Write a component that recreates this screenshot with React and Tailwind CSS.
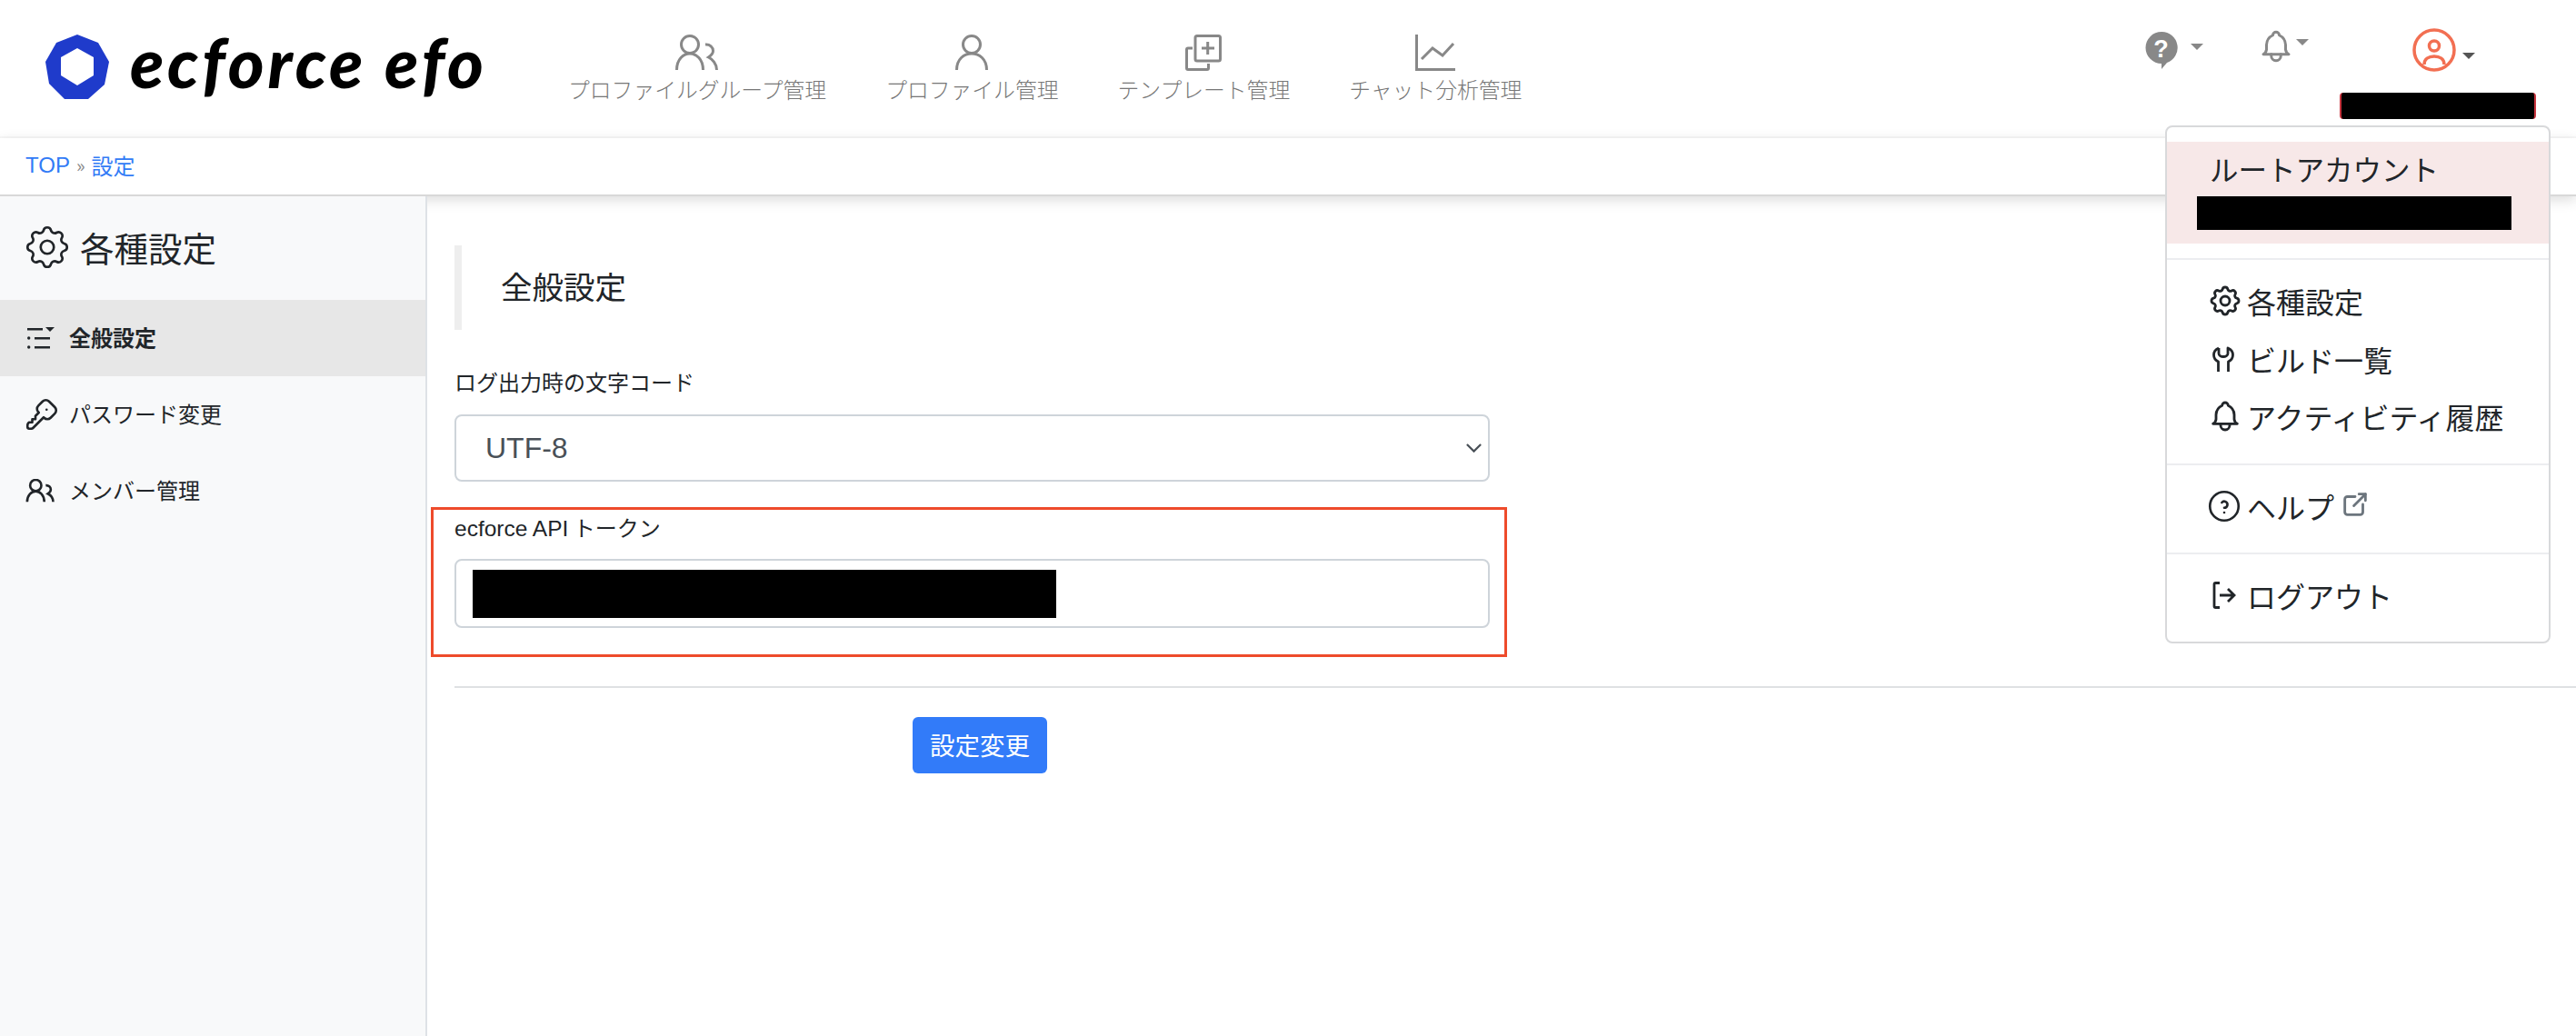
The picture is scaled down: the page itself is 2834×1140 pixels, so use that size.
import { TbSettings, TbBell, TbHelpCircle, TbKey, TbExternalLink } from 'react-icons/tb';

const jp = 'font-["Noto_Sans_CJK_JP","Liberation_Sans",sans-serif]';

function NavItem({ icon, label }) {
  return (
    <div className="flex flex-col items-center text-[#777777]">
      <div className="h-[40px] flex items-center">{icon}</div>
      <div className="text-[23.8px] font-light leading-[34px] mt-[3px] whitespace-nowrap">{label}</div>
    </div>
  );
}

function Caret({ className }) {
  return <div className={'w-0 h-0 border-x-[7px] border-x-transparent border-t-[7px] ' + className}></div>;
}

function SideItem({ icon, label, active }) {
  return (
    <div className={'h-[84px] flex items-center pl-[28px] text-[24px] ' + (active ? 'bg-[#e7e7e7] font-bold' : '')}>
      <div className="w-[48px] flex items-center">{icon}</div>
      <span className="-mt-[2px]">{label}</span>
    </div>
  );
}

function MenuItem({ icon, label, extra, className }) {
  return (
    <div className={'flex items-center pl-[47px] h-[32px] text-[32px] text-[#212529] ' + className}>
      <div className="w-[41px] flex items-center">{icon}</div>
      <span>{label}</span>
      {extra}
    </div>
  );
}

function ListIcon() {
  return (
    <svg className="ml-[2px]" width="30" height="24" viewBox="0 0 30 24" fill="#212529">
      <rect x="0" y="1" width="17" height="2.5" />
      <path d="M20 0h10l-5 5z" />
      <circle cx="1.7" cy="12" r="1.7" />
      <rect x="8" y="11" width="17" height="2.5" />
      <circle cx="1.7" cy="22" r="1.7" />
      <rect x="8" y="21" width="17" height="2.5" />
    </svg>
  );
}

function PeopleIcon({ width, height, stroke, sw }) {
  return (
    <svg width={width} height={height} viewBox="0 0 48 40" fill="none" stroke={stroke} strokeWidth={sw}>
      <circle cx="16" cy="11" r="9.5" />
      <path d="M1.5 39C1.5 27 9 21 16 21s14.5 6 14.5 18" />
      <path d="M33 11c5-.5 8.5 3 8.5 7 0 3-2 5-5 7 4 2 9 7 9 14" />
    </svg>
  );
}

function PersonIcon() {
  return (
    <svg width="36" height="40" viewBox="0 0 36 40" fill="none" stroke="#888888" strokeWidth="3">
      <circle cx="18" cy="11" r="9.5" />
      <path d="M1.5 39c0-12 8-18 16.5-18s16.5 6 16.5 18" />
    </svg>
  );
}

function ChartIcon() {
  return (
    <svg width="44" height="40" viewBox="0 0 44 40" fill="none" stroke="#888888" strokeWidth="3">
      <path d="M1.5 0v38.5H44" />
      <path d="M7 27l12-12 11 8 12-13" />
    </svg>
  );
}

function WrenchIcon() {
  return (
    <svg className="ml-[3px]" width="24" height="28" viewBox="0 0 24 28" fill="none" stroke="#212529" strokeWidth="2.8" strokeLinejoin="round">
      <path d="M7 2v6c0 2 2.5 3.5 5 3.5S17 10 17 8V2c3.500 1.500 5.500 4 5.500 7.500 0 3-2 6-5 7.500v11" />
      <path d="M7 2C3.500 3.500 1.500 6 1.500 9.500c0 3 2 6 5 7.500v11" />
    </svg>
  );
}

function LogoutIcon() {
  return (
    <svg className="ml-[3px]" width="26" height="30" viewBox="0 0 26 30" fill="none" stroke="#212529" strokeWidth="2.8">
      <path d="M8 1.500H3.500A1.500 1.500 0 0 0 2 3v24a1.500 1.500 0 0 0 1.500 1.500H8" />
      <path d="M8 15h16M17 8l7 7-7 7" />
    </svg>
  );
}

export default function App() {
  return (
    <div className={'relative min-h-screen bg-white text-[#212529] ' + jp}>
      {/* header */}
      <header className="h-[152px] flex border-b-2 border-[#f8f8f8]">
        <div className="w-[625px] flex items-start pl-[50px] pt-[38px]">
          <svg width="71" height="72" viewBox="50 38 71 72">
            <path fill="#1f3bcb" d="M85 38l23 9 12 21-5 25-18 16H71L54 92 50 68l12-21z" />
            <path fill="#fff" d="M85 53l18 10v20L85 94 67 83V63z" />
          </svg>
          <span className='ml-[22px] -mt-[25px] font-["Lato"] font-black italic text-[76px] leading-[110px] tracking-[3.8px] text-black whitespace-nowrap'>ecforce efo</span>
        </div>
        <nav className="flex gap-[65px] pt-[38px]">
          <NavItem icon={<PeopleIcon width={48} height={40} stroke="#888888" sw={3} />} label="プロファイルグループ管理" />
          <NavItem icon={<PersonIcon />} label="プロファイル管理" />
          <NavItem
            icon={
              <svg width="40" height="40" viewBox="0 0 40 40" fill="none" stroke="#888888" strokeWidth="3">
                <rect x="11" y="1.500" width="27.500" height="27.500" rx="2" />
                <path d="M24.700 8v14M18 15h14" />
                <path d="M8 15H3a1.500 1.500 0 0 0-1.500 1.500V37A1.500 1.500 0 0 0 3 38.500h21a1.500 1.500 0 0 0 1.500-1.500v-5" />
              </svg>
            }
            label="テンプレート管理"
          />
          <NavItem icon={<ChartIcon />} label="チャット分析管理" />
        </nav>
        <div className="ml-auto flex items-start">
          <div className="flex items-start mt-[35px]">
            <svg width="36" height="41" viewBox="0 0 36 41">
              <path fill="#888888" d="M18 0a17.500 17.500 0 0 1 6 34l-6 7v-6A17.500 17.500 0 0 1 18 0z" />
              <text x="17.500" y="28" textAnchor="middle" fontSize="27" fontWeight="700" fill="#fff" fontFamily="Liberation Sans">?</text>
            </svg>
            <Caret className="ml-[14px] mt-[13px] border-t-[#888888]" />
          </div>
          <div className="flex items-start mt-[30px] ml-[59px] text-[#888888]">
            <TbBell size={42} strokeWidth={1.7} />
            <Caret className="ml-[1px] mt-[13px] border-t-[#888888]" />
          </div>
          <div className="flex items-start mt-[31px] ml-[114px] mr-[111px]">
            <svg width="48" height="48" viewBox="0 0 48 48" fill="none" stroke="#f26f52" strokeWidth="3.500">
              <circle cx="24" cy="24" r="22" />
              <circle cx="24" cy="19.500" r="5.500" />
              <path d="M13 40c0-6 5-9 11-9s11 3 11 9" />
            </svg>
            <Caret className="ml-[7px] mt-[27px] border-t-[#555555]" />
          </div>
        </div>
      </header>

      {/* breadcrumb */}
      <div className="h-[64px] flex items-center pl-[28px] text-[24px] pb-[2px] text-[#327bf6] border-b-2 border-[#d8d8d8] shadow-[0_4px_14px_rgba(0,0,0,0.14)]">
        <span className='font-["Liberation_Sans"]'>TOP</span>
        <span className="mx-[7px] text-[#888888] text-[20px]">»</span>
        <span>設定</span>
      </div>

      <div className="flex">
        {/* sidebar */}
        <aside className="relative w-[470px] min-h-[924px] bg-[#f8f9fa] border-r-2 border-[#dee2e6]">
          <div className="h-[114px] flex items-center pl-[23px] pb-[2px] text-[37.500px]">
            <TbSettings size={58} strokeWidth={1.100} />
            <span className="ml-[7px]">各種設定</span>
          </div>
          <SideItem active icon={<ListIcon />} label="全般設定" />
          <SideItem icon={<TbKey size={42} strokeWidth={1.500} className="-ml-[3px] shrink-0" />} label="パスワード変更" />
          <SideItem icon={<PeopleIcon width={33} height={26} stroke="#212529" sw={4} />} label="メンバー管理" />
        </aside>

        {/* main */}
        <main className="flex-1 pt-[54px] pl-[30px]">
          <div className="border-l-[8px] border-[#eeeeee] h-[93px] flex items-center pl-[43px] pb-[3px] text-[34.500px]">全般設定</div>

          <div className="w-[1139px]">
            <div className="mt-[40px] text-[24px] leading-[34px]">ログ出力時の文字コード</div>
            <div className='mt-[19px] h-[74px] border-2 border-[#ced4da] rounded-[8px] flex items-center justify-between pl-[32px] pr-[7px] font-["Liberation_Sans"] text-[32px] text-[#495057]'>
              <span>UTF-8</span>
              <svg width="17" height="10" viewBox="0 0 19 11" fill="none" stroke="#495057" strokeWidth="2.500">
                <path d="M1 1l8.500 8.500L18 1" />
              </svg>
            </div>

            <div className="relative mt-[35px]">
              {/* red annotation box */}
              <div className="absolute -left-[26px] -right-[19px] -top-[7px] h-[165px] border-[3px] border-[#ee4b2b]"></div>
              <div className="h-[34px] text-[24px] leading-[30px]"><span className='font-["Liberation_Sans"] text-[24.500px]'>ecforce API</span> トークン</div>
              <div className="mt-[16px] h-[76px] border-2 border-[#ced4da] rounded-[8px] flex items-center pl-[18px]">
                <div className="w-[642px] h-[53px] bg-black"></div>
              </div>
            </div>
          </div>

          <div className="mt-[64px] border-t-2 border-[#dfe1e3]"></div>
          <button className="block mt-[32px] ml-[504px] w-[148px] h-[62px] rounded-[6px] bg-[#327bf9] text-white text-[27.500px]">設定変更</button>
        </main>
      </div>

      {/* user name redaction */}
      <div className="absolute left-[2574px] top-[102px] w-[216px] h-[29px] bg-black rounded-[4px] border-x-2 border-[#c8353f]"></div>

      {/* user dropdown */}
      <div className="absolute left-[2382px] top-[138px] w-[424px] h-[570px] bg-white border-2 border-[#d8d9db] rounded-[8px]">
        <div className="mt-[16px] h-[112px] bg-[#f7e8e8] pl-[47px] pt-[10px]">
          <div className="text-[31.500px] leading-[38px]">ルートアカウント</div>
          <div className="-ml-[14px] mt-[12px] w-[346px] h-[37px] bg-black"></div>
        </div>
        <div className="mt-[16px] border-t-2 border-[#ecedf0]"></div>
        <MenuItem className="mt-[29px]" icon={<TbSettings size={40} strokeWidth={1.700} className="-ml-[3px] shrink-0" />} label="各種設定" />
        <MenuItem className="mt-[32px]" icon={<WrenchIcon />} label="ビルド一覧" />
        <MenuItem className="mt-[31px]" icon={<TbBell size={40} strokeWidth={1.700} className="-ml-[3px] shrink-0" />} label="アクティビティ履歴" />
        <div className="mt-[36px] border-t-2 border-[#ecedf0]"></div>
        <MenuItem className="mt-[29px]" icon={<TbHelpCircle size={42} strokeWidth={1.500} className="-ml-[5px] shrink-0" />} label="ヘルプ" extra={<TbExternalLink size={34} className="ml-[6px] -mt-[4px] text-[#6c757d]" />} />
        <div className="mt-[35px] border-t-2 border-[#ecedf0]"></div>
        <MenuItem className="mt-[29px]" icon={<LogoutIcon />} label="ログアウト" />
      </div>
    </div>
  );
}
